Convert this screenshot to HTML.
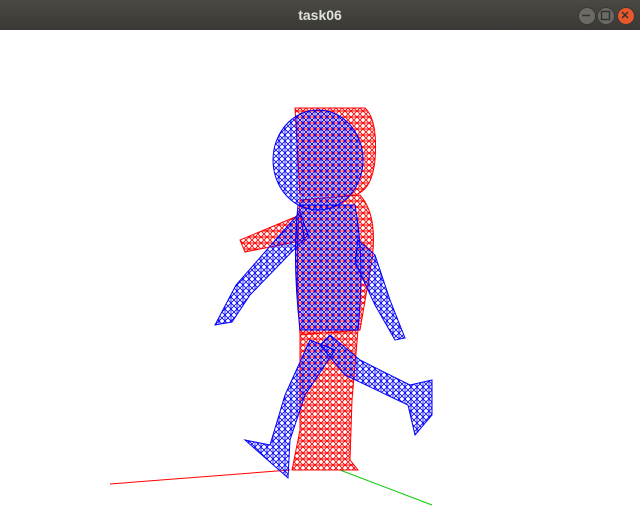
<!DOCTYPE html>
<html><head><style>
body{margin:0;width:640px;height:510px;overflow:hidden;background:#fff;font-family:"Liberation Sans",sans-serif}
.bar{position:absolute;left:0;top:0;width:640px;height:30px;background:linear-gradient(#4a4944,#3a3935);color:#e0e0dc;font-weight:bold;font-size:14px;text-align:center;line-height:30px}
.b{position:absolute;top:7px;width:16px;height:16px;border-radius:50%;background:#6b6a65;border:1px solid #3a3935}
</style></head><body>
<div class="bar">task06</div>
<div class="b" style="left:578px"></div>
<div class="b" style="left:597px"></div>
<div class="b" style="left:617px;background:#e9582b"></div>
<svg width="640" height="510" style="position:absolute;left:0;top:0">
<defs>
<pattern id="r" width="6" height="6" patternUnits="userSpaceOnUse"><path d="M0 0L6 6M6 0L0 6M0 3H6" stroke="#f00" stroke-width="0.9"/></pattern>
<pattern id="bl" width="6" height="6" patternUnits="userSpaceOnUse"><path d="M0 0L6 6M6 0L0 6M3 0V6" stroke="#00f" stroke-width="0.8"/></pattern>
</defs>
<path d="M582 15.5h8" stroke="#333" stroke-width="1.5"/>
<rect x="601.5" y="11.5" width="8" height="8" fill="none" stroke="#333" stroke-width="1.5"/>
<path d="M622 12l6 6M628 12l-6 6" stroke="#333" stroke-width="1.5"/>
<line x1="110" y1="484" x2="290" y2="470" stroke="#f00"/>
<line x1="340" y1="470" x2="432" y2="505" stroke="#0c0"/>
<g fill="url(#r)" stroke="#f00">
<path d="M295 108L365 108Q378 120 375 160Q372 190 355 195L300 195Z"/>
<path d="M300 200L360 195Q378 215 372 260Q365 300 360 330L300 335Q295 260 300 200Z"/>
<path d="M300 215L240 240L245 252L305 240Z"/>
<path d="M300 330L358 330L352 400L350 460L358 470L292 470L300 430Z"/>
</g>
<g fill="url(#bl)" stroke="#00f">
<ellipse cx="318" cy="160" rx="45" ry="50"/>
<path d="M298 205L355 205Q365 260 358 330L300 330Q292 260 298 205Z"/>
<path d="M300 212L236 285L215 325L232 322L250 295L308 235Z"/>
<path d="M358 240L375 255L390 300L405 338L395 340L375 305L355 262Z"/>
<path d="M330 335L360 360L410 385L432 380L432 415L415 435L408 405L345 375L320 345Z"/>
<path d="M310 340L335 350L305 395L290 440L288 478L245 440L270 445L285 395Z"/>
</g>
</svg>
</body></html>
